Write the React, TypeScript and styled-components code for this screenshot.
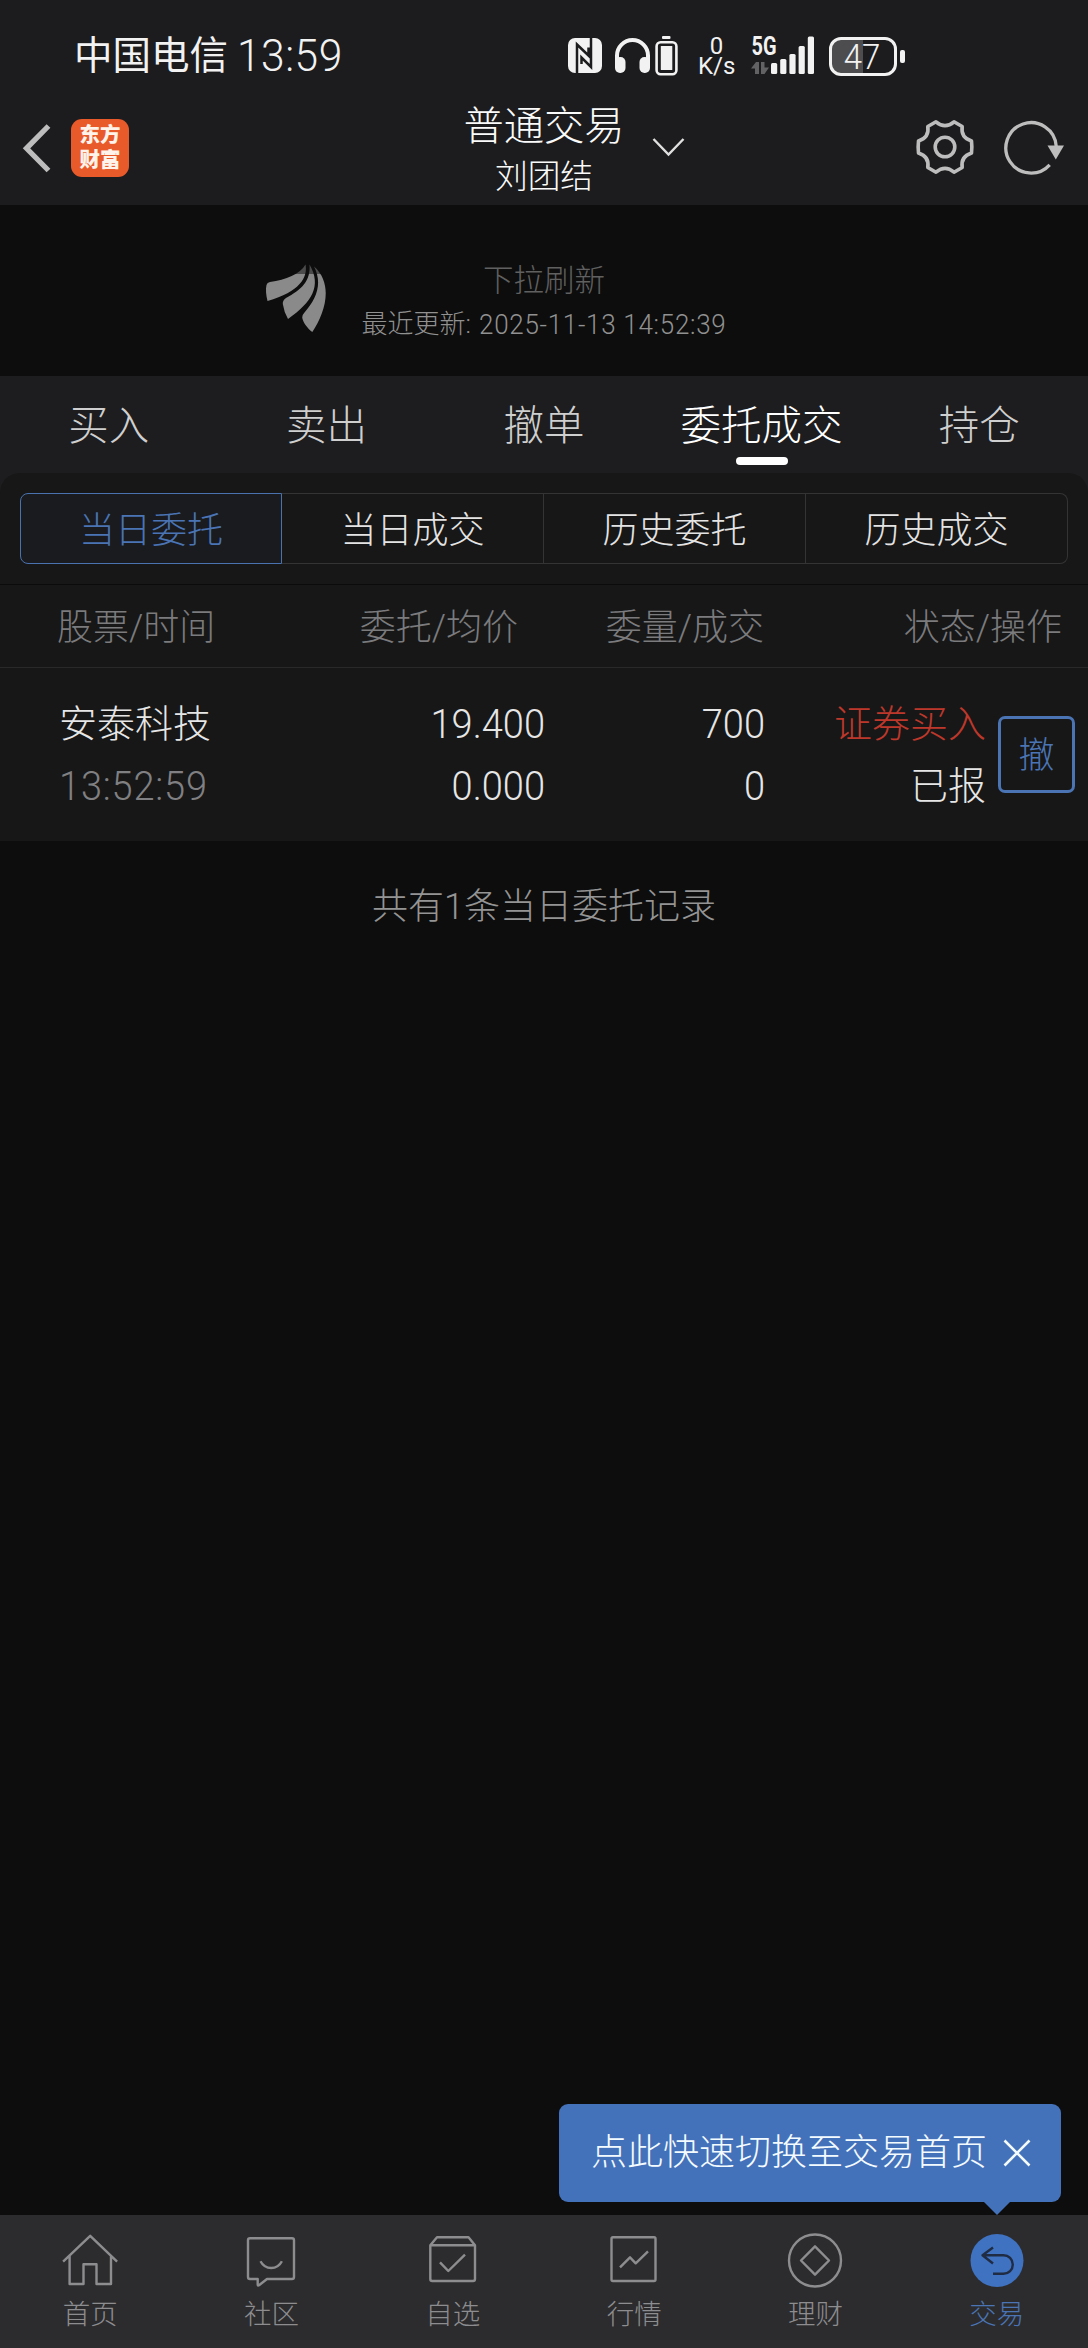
import React from 'react';
import styled, { createGlobalStyle, css } from 'styled-components';

const Global = createGlobalStyle`
  html, body { margin: 0; background: #0d0d0d; }
  * { box-sizing: border-box; }
  body {
    font-family: Roboto, "Noto Sans CJK SC", sans-serif;
    font-weight: 300;
    color: #e6e6e6;
    -webkit-font-smoothing: antialiased;
  }
`;

const Screen = styled.div`
  width: 1088px;
  height: 2348px;
  display: flex;
  flex-direction: column;
  background: #0d0d0d;
  overflow: hidden;
`;

/* ---------- status bar ---------- */
const Top = styled.header`
  height: 205px;
  background: #1c1c1e;
  display: flex;
  flex-direction: column;
`;

const StatusBar = styled.div`
  flex: none;
  height: 96px;
  padding: 16px 0 0 74px;
  display: flex;
  align-items: center;
`;

const Carrier = styled.span`
  width: 494px;
  display: flex;
  align-items: center;
  gap: 9px;
  font-size: 38.5px;
  line-height: 60px;
  font-weight: 400;
  color: #f2f2f2;
`;

const Digits = styled.span<{ $size: number; $stretch?: number; $track?: number }>`
  display: inline-block;
  font-size: ${(p) => p.$size}px;
  font-weight: 300;
  letter-spacing: ${(p) => p.$track ?? 0}px;
  transform: scaleY(${(p) => p.$stretch ?? 1.08});
`;

const Speed = styled.div`
  width: 37px;
  margin: 0 16px 0 20px;
  text-align: center;
  font-size: 24px;
  line-height: 20px;
  font-weight: 400;
  color: #f2f2f2;
`;

const Cell = styled.div`
  width: 64px;
  height: 40px;
  display: flex;
  margin-right: 14px;
  svg { display: block; overflow: visible; }
`;

const PowerLevel = styled.div`
  width: 68px;
  height: 39px;
  padding-right: 2px;
  border: 3.5px solid #f2f2f2;
  border-radius: 12px;
  display: flex;
  align-items: center;
  justify-content: center;
  background: linear-gradient(90deg, #4d4d4f 50%, transparent 50%);
  color: #f2f2f2;
  font-weight: 300;
`;

const PowerTip = styled.i`
  width: 5px;
  height: 13px;
  margin-left: 2.5px;
  border-radius: 2px;
  background: #f2f2f2;
`;

/* ---------- title bar ---------- */
const TitleBar = styled.div`
  height: 109px;
  display: grid;
  grid-template-columns: 400px 1fr 400px;
`;

const TitleSide = styled.div<{ $end?: boolean }>`
  display: flex;
  align-items: center;
  ${(p) =>
    p.$end
      ? css`justify-content: flex-end; gap: 27px; padding: 0 22px 8px 0;`
      : css`gap: 18px; padding: 0 0 6px 20px;`}
`;

const Brand = styled.div`
  width: 58px;
  height: 58px;
  border-radius: 11px;
  background: #e95a2b;
  color: #fff3ea;
  font-size: 20.5px;
  line-height: 25px;
  font-weight: 900;
  padding-top: 4px;
  text-align: center;
`;

const TitleCenter = styled.div`
  display: flex;
  justify-content: center;
  position: relative;
`;

const Titles = styled.div`
  display: flex;
  flex-direction: column;
  align-items: center;
  padding-top: 4px;
  color: #fafafa;
`;

const Title = styled.h1`
  margin: 0;
  font-size: 40.3px;
  line-height: 54px;
  font-weight: 300;
`;

const Account = styled.span`
  font-size: 32.7px;
  line-height: 46px;
`;

const Expand = styled.svg`
  position: absolute;
  left: 251px;
  top: 40px;
`;

/* ---------- pull to refresh ---------- */
const Refresh = styled.section`
  height: 171px;
  padding: 55px 0 0 264px;
  display: flex;
  gap: 33px;
`;

const RefreshText = styled.div`
  width: 366px;
  display: flex;
  flex-direction: column;
  align-items: center;
  white-space: nowrap;
`;

const Hint = styled.span`
  font-size: 30.5px;
  line-height: 42px;
  color: #606060;
`;

const Updated = styled.span`
  display: flex;
  gap: 8px;
  font-size: 26px;
  line-height: 44px;
  color: #919191;
`;

/* ---------- tabs ---------- */
const TabBack = styled.div`
  background: #1d1d1f;
`;

const Tabs = styled.nav`
  height: 97px;
  display: grid;
  grid-template-columns: repeat(5, 1fr);
`;

const Tab = styled.div<{ $active?: boolean }>`
  display: flex;
  flex-direction: column;
  align-items: center;
  padding-top: 22px;
  font-size: 40.5px;
  line-height: 56px;
  color: ${(p) => (p.$active ? '#ffffff' : '#cfcfcf')};
  &::after {
    content: '';
    width: 52px;
    height: 8px;
    margin-top: 3px;
    border-radius: 4px;
    background: ${(p) => (p.$active ? '#ffffff' : 'transparent')};
  }
`;

const Panel = styled.div`
  height: 112px;
  padding: 20px;
  background: #171717;
  border-radius: 20px 20px 0 0;
  border-bottom: 1px solid #0b0b0b;
`;

const Segments = styled.div`
  display: grid;
  grid-template-columns: repeat(4, 1fr);
  height: 71px;
`;

const Segment = styled.div<{ $active?: boolean }>`
  display: flex;
  align-items: center;
  justify-content: center;
  font-size: 36px;
  line-height: 50px;
  padding-top: 5px;
  border: 1px solid ${(p) => (p.$active ? '#4a72ae' : '#343434')};
  background: ${(p) => (p.$active ? '#191b1f' : 'transparent')};
  color: ${(p) => (p.$active ? '#4a74b4' : '#e4e4e4')};
  &:not(:first-child) { border-left-width: 0; }
  &:first-child { border-radius: 8px 0 0 8px; }
  &:last-child { border-radius: 0 8px 8px 0; }
`;

/* ---------- orders ---------- */
const HeadRow = styled.div`
  display: grid;
  grid-template-columns: 260px 259px 245px 1fr;
  height: 83px;
  padding: 3px 26px 0 57px;
  align-items: center;
  background: #171717;
  border-bottom: 1px solid #292929;
  font-size: 36px;
  line-height: 50px;
  color: #7b7b7e;
`;

const HeadCell = styled.span<{ $right?: boolean; $inset?: number }>`
  text-align: ${(p) => (p.$right ? 'right' : 'left')};
  padding-right: ${(p) => p.$inset ?? 0}px;
`;

const OrderRow = styled.div`
  display: grid;
  grid-template-columns: 260px 226px 220px 221px 1fr;
  height: 173px;
  padding: 25px 0 0 59px;
  background: #171717;
  font-size: 38px;
  line-height: 62px;
`;

const OrderCell = styled.div<{ $right?: boolean }>`
  display: flex;
  flex-direction: column;
  align-items: ${(p) => (p.$right ? 'flex-end' : 'flex-start')};
`;

const Value = styled.span<{ $tone?: string }>`
  color: ${(p) => p.$tone ?? '#e6e6e6'};
`;

const Cancel = styled.button`
  width: 77px;
  height: 77px;
  margin: 23px 0 0 12px;
  padding: 3px 0 0;
  border: 3px solid #4a74b4;
  border-radius: 7px;
  background: none;
  color: #4a74b4;
  font: inherit;
  font-size: 36px;
  line-height: 50px;
`;

const Summary = styled.p`
  flex: 1;
  margin: 0;
  padding-top: 40px;
  text-align: center;
  font-size: 36px;
  line-height: 52px;
  color: #949494;
`;

/* ---------- bottom bar ---------- */
const BottomBar = styled.footer`
  position: relative;
  height: 133px;
  padding: 15px 0 0;
  background: #2c2c2e;
  display: grid;
  grid-template-columns: repeat(6, 1fr);
`;

const NavItem = styled.div<{ $active?: boolean }>`
  display: flex;
  flex-direction: column;
  align-items: center;
  gap: 5px;
  font-size: 27.5px;
  line-height: 40px;
  color: ${(p) => (p.$active ? '#4a74b4' : '#8d8d90')};
  margin-left: -1px;
  svg { display: block; }
`;

const Bubble = styled.div`
  position: absolute;
  right: 27px;
  top: -111px;
  width: 502px;
  height: 98px;
  padding: 0 30px 1px 32px;
  display: flex;
  align-items: center;
  justify-content: space-between;
  border-radius: 9px;
  background: #4472ba;
  color: #f4fbff;
  font-size: 36px;
  line-height: 52px;
  white-space: nowrap;
  &::after {
    content: '';
    position: absolute;
    right: 51px;
    top: 98px;
    border: 13px solid transparent;
    border-bottom: 0;
    border-top-color: #4472ba;
  }
`;

const NavIcon = ({ children }: { children: React.ReactNode }) => (
  <svg width="60" height="60" viewBox="0 0 60 60" fill="none" stroke="currentColor" strokeWidth="2.4" strokeLinejoin="round">
    {children}
  </svg>
);

const navItems = [
  { label: '首页', icon: <path d="M3.1 31.7 30.2 5.8l26.9 25.9M9.6 26v28h13.9V34.3h13V54H51V26" /> },
  {
    label: '社区',
    icon: (
      <path d="M9 8.3H51a2 2 0 0 1 2 2V47a2 2 0 0 1-2 2H26l-8 6.3q-1.3.7-1.3-.8V49H9a2 2 0 0 1-2-2V10.3a2 2 0 0 1 2-2ZM19.5 31.3q3.5 6.7 10.7 6.7t10.7-6.7" />
    ),
  },
  {
    label: '自选',
    icon: <path d="M7.3 15.3 14 7.3H45.5L52 15.3V49a2 2 0 0 1-2 2H9.3a2 2 0 0 1-2-2ZM7.3 15.3H52M17 32.3 25.3 41 42 24.7" />,
  },
  {
    label: '行情',
    icon: (
      <>
        <rect x="7.5" y="7.3" width="44" height="43.7" rx="1.5" />
        <path d="M16 37.3 26 27.3 31.7 33.3 44 21.3" />
      </>
    ),
  },
  {
    label: '理财',
    icon: (
      <>
        <circle cx="30" cy="30.5" r="26" />
        <path d="M30 16.3 44 30.5 30 44.7 16 30.5Z" />
      </>
    ),
  },
  {
    label: '交易',
    active: true,
    icon: (
      <>
        <circle cx="30" cy="30.5" r="26.5" fill="#3f72c0" stroke="none" />
        <path d="M26 17.5 15.5 25.2 26 33.5M15.5 25.2H36.5a9.3 9.3 0 0 1 0 18.6H26" stroke="#202c43" />
      </>
    ),
  },
];

const StatusIcons = () => (
  <svg width="110" height="40" viewBox="0 0 110 40">
    <rect x="0" y="2" width="34" height="35" rx="7" fill="#f2f2f2" />
    <path d="M9 37.5V8.5L20.5 19.5V11.5M23 1.5v29.5L13.5 21.5V28" fill="none" stroke="#1c1c1e" strokeWidth="2.5" />
    <path d="M49 27V19.5a15.5 15.5 0 0 1 31 0v7.5" fill="none" stroke="#f2f2f2" strokeWidth="4" />
    <rect x="47" y="21" width="10.5" height="16" rx="5" fill="#f2f2f2" />
    <rect x="71.5" y="21" width="10.5" height="16" rx="5" fill="#f2f2f2" />
    <rect x="94" y="0" width="8.5" height="3" rx="1" fill="#f2f2f2" />
    <rect x="88.6" y="6.2" width="19.8" height="32" rx="4" fill="none" stroke="#f2f2f2" strokeWidth="2.6" />
    <rect x="92.8" y="10" width="11.5" height="24" rx="0.5" fill="#f2f2f2" />
  </svg>
);

const bars = [
  [20, 11],
  [29.2, 15],
  [38.4, 20],
  [47.6, 28],
  [56.8, 37.5],
];

const Signal = () => (
  <svg width="64" height="40" viewBox="0 0 64 40">
    <text x="0.5" y="19" fill="#f2f2f2" fontSize="25" fontWeight="700" fontFamily="Roboto" textLength="25" lengthAdjust="spacingAndGlyphs">
      5G
    </text>
    <path d="M0 32.5 5 26h3v12H4v-5.5ZM10 26h3.5v5.5H18L13.5 38H10Z" fill="#626264" />
    {bars.map(([x, h]) => (
      <rect key={x} x={x} y={38 - h} width="6.2" height={h} rx="1.5" fill="#f2f2f2" />
    ))}
  </svg>
);

const Back = () => (
  <svg width="33" height="58" viewBox="0 0 33 58" fill="none" stroke="#bdbdbd" strokeWidth="5.3">
    <path d="M28.5 7 6.5 29.3 28.5 51.5" />
  </svg>
);

const Gear = () => (
  <svg width="60" height="60" viewBox="-30 -30 60 60" fill="none" stroke="#bdbdbd" strokeWidth="3.6" strokeLinejoin="round">
    <path d="M-9-25.2Q0-17.5 9-25.2L17.2-20.5Q15.5-9.5 26.5-6Q27.2 0 26.5 6Q15.5 9.5 17.2 20.5L9 25.2Q0 17.5-9 25.2L-17.2 20.5Q-15.5 9.5-26.5 6Q-27.2 0-26.5-6Q-15.5-9.5-17.2-20.5Z" />
    <circle r="9.8" />
  </svg>
);

const Reload = () => (
  <svg width="64" height="60" viewBox="-29 -31 64 60" fill="none" stroke="#bdbdbd" strokeWidth="3.3">
    <path d="M18.7 16.8A25.2 25.2 0 1 1 25.2-2" />
    <path d="M16.5-2.5H33L24.8 11.5Z" fill="#bdbdbd" stroke="none" />
  </svg>
);

const Plume = () => (
  <svg width="64" height="80" viewBox="264 260 64 80">
    <defs>
      <linearGradient id="plume" x1="0" y1="264" x2="0" y2="332" gradientUnits="userSpaceOnUse">
        <stop offset="0.14" stopColor="#4b4b4b" />
        <stop offset="0.14" stopColor="#8a8a8a" />
      </linearGradient>
    </defs>
    <g fill="url(#plume)">
      <path d="M305.5 264.5C308 277 300 292 267.5 301C266 295 265.5 289 266.5 285Q267 282.5 270 282C286 280 300 274 305.5 264.5Z" />
      <path d="M309.5 264.5C322 286 312 302 288 319Q284 312 282.8 304Q282.5 300.5 286 298C301 290 311 281 309.5 264.5Z" />
      <path d="M314 266.5C334 284 325 313 312.3 332C307 328 303 322 302.3 318Q302 315 304.5 312.5C316 299 323 284 314 266.5Z" />
    </g>
  </svg>
);

const tabs = ['买入', '卖出', '撤单', '委托成交', '持仓'];
const segments = ['当日委托', '当日成交', '历史委托', '历史成交'];

export default function App() {
  return (
    <Screen>
      <Global />
      <Top>
        <StatusBar>
          <Carrier>
            中国电信
            <Digits $size={42.5} $stretch={1.06} $track={0.5}>13:59</Digits>
          </Carrier>
          <StatusIcons />
          <Speed>
            0
            <br />
            K/s
          </Speed>
          <Cell>
            <Signal />
          </Cell>
          <PowerLevel>
            <Digits $size={33}>47</Digits>
          </PowerLevel>
          <PowerTip />
        </StatusBar>
        <TitleBar>
          <TitleSide>
            <Back />
            <Brand>
              东方
              <br />
              财富
            </Brand>
          </TitleSide>
          <TitleCenter>
            <Titles>
              <Title>普通交易</Title>
              <Account>刘团结</Account>
            </Titles>
            <Expand width="36" height="24" viewBox="0 0 36 24" fill="none" stroke="#e0e0e0" strokeWidth="2.4">
              <path d="M2.5 3 17.500 18.500 32.500 3" />
            </Expand>
          </TitleCenter>
          <TitleSide $end>
            <Gear />
            <Reload />
          </TitleSide>
        </TitleBar>
      </Top>

      <Refresh>
        <Plume />
        <RefreshText>
          <Hint>下拉刷新</Hint>
          <Updated>
            最近更新:
            <Digits $size={26} $stretch={1.06} $track={0.7}>2025-11-13 14:52:39</Digits>
          </Updated>
        </RefreshText>
      </Refresh>

      <TabBack>
        <Tabs>
          {tabs.map((t) => (
            <Tab key={t} $active={t === '委托成交'}>
              {t}
            </Tab>
          ))}
        </Tabs>
        <Panel>
          <Segments>
            {segments.map((s, i) => (
              <Segment key={s} $active={i === 0}>
                {s}
              </Segment>
            ))}
          </Segments>
        </Panel>
      </TabBack>

      <HeadRow>
        <HeadCell>股票/时间</HeadCell>
        <HeadCell $right $inset={58}>委托/均价</HeadCell>
        <HeadCell $right $inset={57}>委量/成交</HeadCell>
        <HeadCell $right>状态/操作</HeadCell>
      </HeadRow>
      <OrderRow>
        <OrderCell>
          <Value>安泰科技</Value>
          <Value $tone="#808083">
            <Digits $size={38} $track={0.8}>13:52:59</Digits>
          </Value>
        </OrderCell>
        <OrderCell $right>
          <Digits $size={38}>19.400</Digits>
          <Digits $size={38}>0.000</Digits>
        </OrderCell>
        <OrderCell $right>
          <Digits $size={38}>700</Digits>
          <Digits $size={38}>0</Digits>
        </OrderCell>
        <OrderCell $right>
          <Value $tone="#be372b">证券买入</Value>
          <Value>已报</Value>
        </OrderCell>
        <Cancel>撤</Cancel>
      </OrderRow>
      <Summary>共有1条当日委托记录</Summary>

      <BottomBar>
        {navItems.map((n) => (
          <NavItem key={n.label} $active={n.active}>
            <NavIcon>{n.icon}</NavIcon>
            {n.label}
          </NavItem>
        ))}
        <Bubble>
          点此快速切换至交易首页
          <svg width="28" height="28" viewBox="0 0 28 28" fill="none" stroke="currentColor" strokeWidth="2.6">
            <path d="M1.5 1.5 26.5 26.5M26.5 1.5 1.5 26.5" />
          </svg>
        </Bubble>
      </BottomBar>
    </Screen>
  );
}
